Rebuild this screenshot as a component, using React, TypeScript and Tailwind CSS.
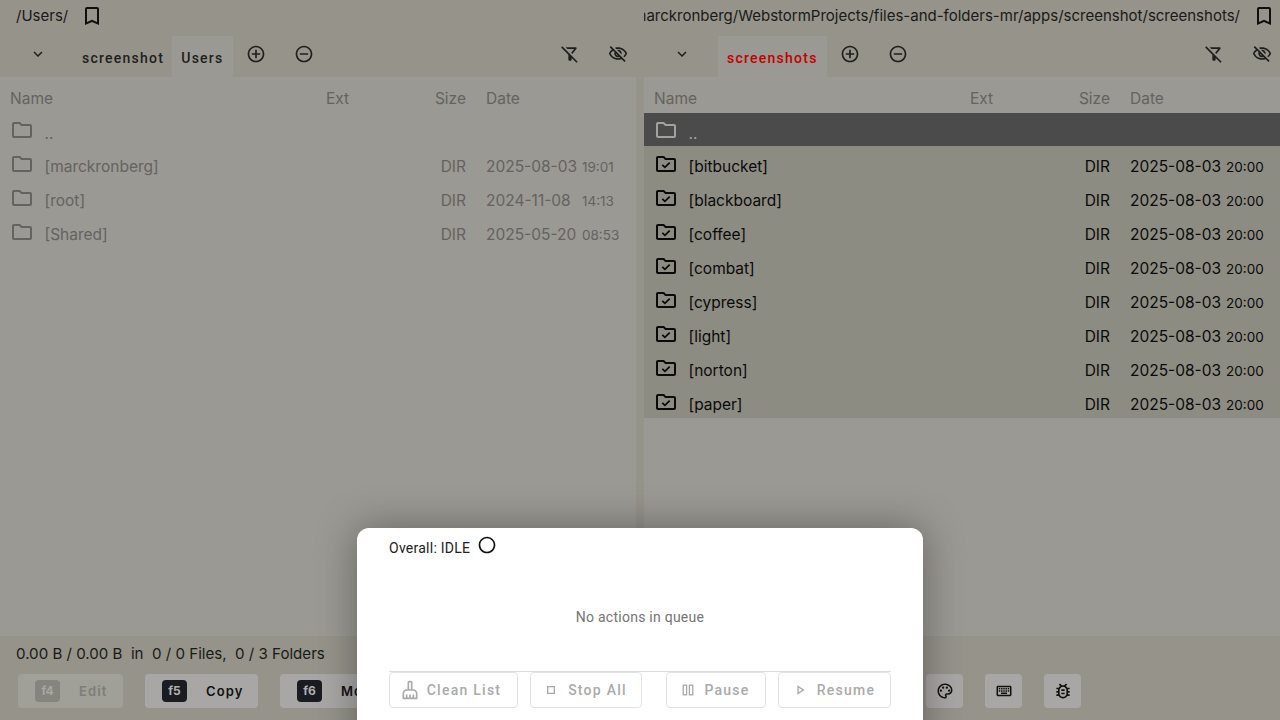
import React from "react";
import {
  MdBookmarkBorder, MdExpandMore, MdAddCircleOutline, MdRemoveCircleOutline, MdOutlineFilterAltOff,
  MdOutlineVisibilityOff, MdOutlineFolder, MdRadioButtonUnchecked, MdOutlineStop, MdOutlinePlayArrow,
  MdOutlinePalette, MdOutlineKeyboard, MdOutlineBugReport, MdOutlineCleaningServices,
} from "react-icons/md";

type Row = { n: string; s?: string; d?: string; t?: string; sel?: boolean; active?: boolean };

const left: Row[] = [
  { n: ".." },
  { n: "[marckronberg]", s: "DIR", d: "2025-08-03", t: "19:01" },
  { n: "[root]", s: "DIR", d: "2024-11-08", t: "14:13" },
  { n: "[Shared]", s: "DIR", d: "2025-05-20", t: "08:53" },
];
const names = ["[bitbucket]", "[blackboard]", "[coffee]", "[combat]", "[cypress]", "[light]", "[norton]", "[paper]"];
const right: Row[] = [
  { n: "..", active: true },
  ...names.map((n) => ({ n, s: "DIR", d: "2025-08-03", t: "20:00", sel: true })),
];

function FolderCheckIcon() {
  return (
    <svg width="24" height="24" viewBox="0 0 24 24" fill="currentColor">
      <path d="M9.17 6l2 2H20v10H4V6h5.17M10 4H4c-1.1 0-1.99.9-1.99 2L2 18c0 1.1.9 2 2 2h16c1.1 0 2-.9 2-2V8c0-1.1-.9-2-2-2h-8l-2-2z" />
      <path d="M8.3 12.8l2.6 2.5 4.8-4.6" fill="none" stroke="currentColor" strokeWidth="1.8" />
    </svg>
  );
}

function FileRow({ r, first }: { r: Row; first: boolean }) {
  const bg = r.active ? "bg-[#4b4b4b]" : r.sel ? "bg-[#8d8c82]" : "";
  const fg = r.active ? "text-[#a3a29c]" : r.sel ? "text-[#0a0a0a]" : "text-[#64635f]";
  return (
    <div className={`flex shrink-0 items-center ${first ? "h-[33px]" : "h-[34px]"} ${bg} ${fg}`}>
      <div className={`flex w-[44px] shrink-0 justify-center ${first ? "" : "translate-y-[1px]"}`}>
        {r.sel ? <FolderCheckIcon /> : <MdOutlineFolder size={24} />}
      </div>
      <div className="w-[282px] shrink-0 translate-x-[0.5px] translate-y-[4px]">{r.n}</div>
      <div className="w-[60px] shrink-0" />
      <div className="w-[80px] shrink-0 text-right translate-y-[4px]">{r.s}</div>
      <div className="ml-[20px] flex shrink-0 items-baseline translate-y-[4px] whitespace-nowrap">
        <span className="w-[96px]">{r.d}</span>
        <span className="text-[13.5px]">{r.t}</span>
      </div>
    </div>
  );
}

function Panel({ path, tabs, rows, activeRed, pathRight }: { path: string; tabs: string[]; rows: Row[]; activeRed?: boolean; pathRight?: boolean }) {
  return (
    <div className="flex w-[636px] shrink-0 flex-col">
      <div className={`flex h-[36px] shrink-0 items-center overflow-hidden pb-[4px] ${pathRight ? "justify-end pr-[4px]" : "pl-[16px]"}`}>
        <span className="text-[15px] whitespace-nowrap text-[#1a1a18]">{path}</span>
        <MdBookmarkBorder size={24} className="ml-[12px] shrink-0 text-[#0f0f0f]" />
      </div>
      <div className="flex h-[41px] shrink-0 items-center">
        <div className={`flex shrink-0 justify-center ${pathRight ? "w-[74px]" : "w-[73px]"}`}>
          <MdExpandMore size={18} className="translate-x-[1px] -translate-y-[3px] text-[#1f1f1e]" />
        </div>
        {tabs.map((t, i) => {
          const on = i === tabs.length - 1;
          return (
            <div
              key={t}
              className={`flex h-[41px] items-center pt-[3px] font-['Roboto',sans-serif] text-[14px] font-medium tracking-[1.25px] ${on ? "bg-[#9a9993] px-[9px]" : "pr-[8px] pl-[9px]"} ${on && activeRed ? "text-[#c40000]" : "text-[#1f1f1e]"}`}
            >
              {t}
            </div>
          );
        })}
        <MdAddCircleOutline size={20} className="ml-[13.5px] -translate-y-[3px] text-[#1f1f1e]" />
        <MdRemoveCircleOutline size={20} className="ml-[28px] -translate-y-[3px] text-[#1f1f1e]" />
        <div className="ml-auto flex items-center gap-[28px] pr-[8px] -translate-y-[3px]">
          <MdOutlineFilterAltOff size={20} className="text-[#1f1f1e]" />
          <MdOutlineVisibilityOff size={20} className="text-[#1f1f1e]" />
        </div>
      </div>
      <div className="flex min-h-0 flex-1 flex-col overflow-hidden bg-[#9a9993]">
        <div className="flex h-[36px] shrink-0 items-center pt-[8px] text-[#64635f]">
          <div className="w-[326px] shrink-0 pl-[10px]">Name</div>
          <div className="w-[60px] shrink-0">Ext</div>
          <div className="w-[80px] shrink-0 text-right">Size</div>
          <div className="ml-[20px]">Date</div>
        </div>
        <div className="flex flex-col">
          {rows.map((r, i) => (
            <FileRow key={i} r={r} first={i === 0} />
          ))}
        </div>
      </div>
    </div>
  );
}

function Fkey({ k, label, disabled, w }: { k: string; label: string; disabled?: boolean; w: string }) {
  return (
    <div className={`flex h-[34px] shrink-0 items-center rounded-[4px] pl-[17px] ${w} ${disabled ? "bg-[#a09f98]" : "bg-[#a8a7a6]"}`}>
      <span className={`flex h-[22px] w-[25px] items-center justify-center rounded-[4px] text-[12px] font-bold ${disabled ? "bg-[#85847e] text-[#a8a7a2]" : "bg-[#1b1c22] text-[#b0b0b0]"}`}>{k}</span>
      <span className={`ml-[19px] text-[13px] font-semibold tracking-[1.1px] ${disabled ? "text-[#7e7d77]" : "text-[#111111]"}`}>{label}</span>
    </div>
  );
}

function MBtn({ icon, label, w, gap, className = "" }: { icon: React.ReactNode; label: string; w: string; gap: string; className?: string }) {
  return (
    <div className={`flex h-[36px] shrink-0 items-center justify-center rounded-[4px] border border-[#e3e3e3] font-['Roboto',sans-serif] text-[14px] font-medium tracking-[1.25px] text-[#aaaaaa] ${w} ${gap} ${className}`}>
      {icon}
      <span>{label}</span>
    </div>
  );
}

function IconBtn({ children }: { children: React.ReactNode }) {
  return <div className="flex h-[34px] w-[37px] shrink-0 items-center justify-center rounded-[4px] bg-[#a8a7a6] text-[#111111]">{children}</div>;
}

function PauseIcon() {
  return (
    <svg width="12" height="12" viewBox="0 0 12 12" fill="none" stroke="currentColor" strokeWidth="1.3">
      <rect x="1.2" y="1.2" width="3.4" height="9.6" />
      <rect x="7.4" y="1.2" width="3.4" height="9.6" />
    </svg>
  );
}

export default function App() {
  return (
    <div className="relative flex h-[720px] w-[1280px] flex-col overflow-hidden bg-[#95938a] font-['Inter',sans-serif] text-[15.5px] leading-[24px]">
      <div className="flex min-h-0 flex-1 gap-[8px]">
        <Panel path="/Users/" tabs={["screenshot", "Users"]} rows={left} />
        <Panel path="/Users/marckronberg/WebstormProjects/files-and-folders-mr/apps/screenshot/screenshots/" tabs={["screenshots"]} rows={right} activeRed pathRight />
      </div>
      <div className="flex h-[84px] shrink-0 flex-col bg-[#95938a]">
        <div className="flex h-[38px] items-center pl-[16px] pb-[3px] text-[15.1px] whitespace-pre text-[#1a1a18]">
          <span>0.00 B / 0.00 B  in  0 / 0 Files,  0 / 3 Folders</span>
        </div>
        <div className="flex items-center">
          <div className="ml-[18px] flex gap-[22px]">
            <Fkey k="f4" label="Edit" disabled w="w-[105px]" />
            <Fkey k="f5" label="Copy" w="w-[113px]" />
            <Fkey k="f6" label="Move" w="w-[113px]" />
          </div>
          <div className="ml-auto mr-[199px] flex gap-[22px]">
            <IconBtn><MdOutlinePalette size={18} /></IconBtn>
            <IconBtn><MdOutlineKeyboard size={18} /></IconBtn>
            <IconBtn><MdOutlineBugReport size={20} /></IconBtn>
          </div>
        </div>
      </div>
      <div className="absolute left-[357px] top-[528px] flex h-[240px] w-[566px] flex-col rounded-t-[12px] bg-white px-[32px] font-['Roboto',sans-serif] shadow-[0_0_40px_rgba(0,0,0,0.35)]">
        <div className="flex h-[36px] items-center text-[14px] tracking-[0.25px] text-[#212121]">
          <span className="pt-[3px]">Overall: IDLE</span>
          <MdRadioButtonUnchecked size={20} className="ml-[7px] -translate-y-[1px] text-[#111111]" />
        </div>
        <div className="flex h-[107px] items-center justify-center pb-[1px] text-[14px] tracking-[0.25px] text-[#757575]">
          No actions in queue
        </div>
        <div className="border-t border-[#dcdcdc]">
          <div className="flex gap-[12px]">
            <MBtn icon={<MdOutlineCleaningServices size={20} />} label="Clean List" gap="gap-[7px]" w="w-[129px]" className="pr-[6px]" />
            <MBtn icon={<MdOutlineStop size={16} />} label="Stop All" gap="gap-[9px]" w="w-[112px]" className="pr-[2px]" />
            <MBtn icon={<PauseIcon />} label="Pause" gap="gap-[10px]" w="w-[100px]" className="ml-[12px]" />
            <MBtn icon={<MdOutlinePlayArrow size={16} />} label="Resume" gap="gap-[9px]" w="w-[113px]" className="pr-[2px]" />
          </div>
        </div>
      </div>
    </div>
  );
}
